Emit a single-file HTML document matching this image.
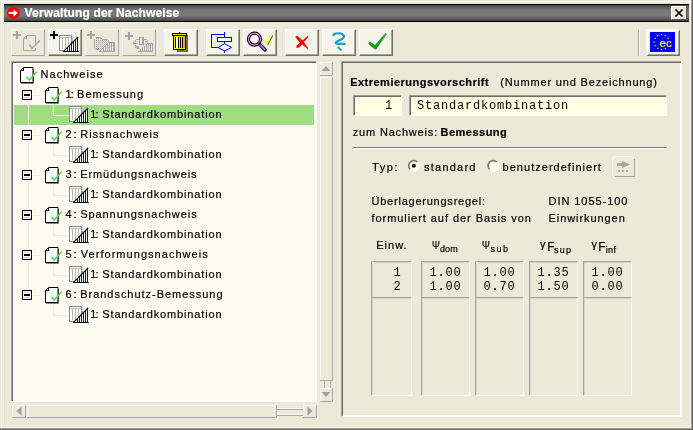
<!DOCTYPE html>
<html><head><meta charset="utf-8">
<style>
*{box-sizing:border-box;margin:0;padding:0}
html,body{width:693px;height:430px;overflow:hidden}
body{background:#ECE9D8;position:relative;font-family:"Liberation Sans",sans-serif;font-size:11px;color:#000}
.a{position:absolute}
.t{position:absolute;white-space:nowrap;line-height:14px;height:14px;letter-spacing:.55px;-webkit-text-stroke:.2px}
.b{font-weight:bold}
.m{position:absolute;white-space:pre;font-family:"Liberation Mono",monospace;font-size:12px;letter-spacing:.8px;line-height:14px;height:14px}
.btn{position:absolute;top:29px;width:34px;height:27px;background:#F5F4EA;border:1px solid;border-color:#fff #716F64 #716F64 #fff;box-shadow:inset -1px -1px 0 #ACA899}
.dis{position:absolute;top:29px;width:34px;height:27px;background:#ECE9D8;border:1px solid;border-color:#F6F5EE #A3A3AB #A3A3AB #F6F5EE}
.sunk{position:absolute;border:1px solid;border-color:#A0A0A0 #fff #fff #A0A0A0;box-shadow:inset 1px 1px 0 #6E6E6E}
.cell{position:absolute;border:1px solid;border-color:#A5A5A5 #F8F7F0 #F8F7F0 #A5A5A5;box-shadow:inset 1px 1px 0 #D8D6C8}
svg{position:absolute;overflow:visible;left:0;top:0}
</style></head><body>
<div id="w" style="position:absolute;left:0;top:0;width:693px;height:430px;will-change:transform">
<!-- window frame -->
<div class="a" style="left:1px;top:1px;width:690px;height:1px;background:#fff"></div>
<div class="a" style="left:1px;top:1px;width:1px;height:427px;background:#fff"></div>
<div class="a" style="left:690px;top:2px;width:1px;height:426px;background:#F3F2E6"></div>
<div class="a" style="left:2px;top:427px;width:689px;height:1px;background:#F3F2E6"></div>
<div class="a" style="left:691px;top:0;width:1px;height:430px;background:#9D9DA1"></div>
<div class="a" style="left:692px;top:0;width:1px;height:430px;background:#6A695F"></div>
<div class="a" style="left:0;top:428px;width:692px;height:1px;background:#9D9DA1"></div>
<div class="a" style="left:0;top:429px;width:693px;height:1px;background:#6A695F"></div>
<!-- title bar -->
<div class="a" style="left:4px;top:4px;width:685px;height:18px;background:linear-gradient(#000 0,#000 1px,#444 1px,#787878 6px,#787878 11.500px,#464646 17px,#000 17px,#000 18px)"></div>
<svg width="30" height="24"><ellipse cx="13.500" cy="13" rx="6.500" ry="6.100" fill="#F00"/><path d="M8.6 12h5v-2.6l4.4 3.6-4.4 3.6v-2.6h-5z" fill="#fff"/></svg>
<div class="t" id="title" style="left:24.60px;top:6px;letter-spacing:0.140px;font-weight:bold;font-size:12px;color:#fff">Verwaltung der Nachweise</div>
<div class="a" style="left:671px;top:6px;width:16px;height:14px;background:#ECE9D8;border:1px solid;border-color:#fff #555 #555 #fff"></div>
<svg width="693" height="24"><path d="M675.5 9.5l7 7M682.5 9.5l-7 7" stroke="#000" stroke-width="1.7" fill="none"/></svg>

<!-- toolbar -->
<div class="dis" style="left:11px"></div>
<div class="btn" style="left:48px"></div>
<div class="dis" style="left:85px"></div>
<div class="dis" style="left:122px"></div>
<div class="btn" style="left:164px"></div>
<div class="btn" style="left:206px"></div>
<div class="btn" style="left:243px"></div>
<div class="btn" style="left:285px"></div>
<div class="btn" style="left:322px"></div>
<div class="btn" style="left:359px"></div>
<div class="a" style="left:638px;top:29px;width:1px;height:27px;background:#ACA899"></div>
<div class="a" style="left:639px;top:29px;width:1px;height:27px;background:#fff"></div>
<div class="btn" style="left:646px;border-width:2px 1px 1px 2px"></div>
<div class="a" style="left:650px;top:32px;width:25px;height:20px;background:#0000FF"></div>

<svg width="693" height="60" fill="#E8D800"><rect x="660.9" y="34.0" width="1.3" height="1.3"/><rect x="664.6" y="35.0" width="1.3" height="1.3"/><rect x="667.3" y="37.7" width="1.3" height="1.3"/><rect x="664.6" y="47.8" width="1.3" height="1.3"/><rect x="660.9" y="48.8" width="1.3" height="1.3"/><rect x="657.2" y="47.8" width="1.3" height="1.3"/><rect x="654.5" y="45.1" width="1.3" height="1.3"/><rect x="653.5" y="41.4" width="1.3" height="1.3"/><rect x="654.5" y="37.7" width="1.3" height="1.3"/><rect x="657.2" y="35.0" width="1.3" height="1.3"/></svg>
<div class="t" style="left:659.5px;top:36px;font-size:11.5px;color:#FFFF00;letter-spacing:0">ec</div>
<svg width="693" height="60" shape-rendering="crispEdges">
<defs><pattern id="dz" width="2" height="2" patternUnits="userSpaceOnUse"><rect width="1" height="1" fill="#A3A3AB"/><rect x="1" y="1" width="1" height="1" fill="#BDBDC0"/></pattern></defs>
<path d="M13 34h8v2h-8zM16 31h2v8h-2z" fill="#A3A3AB"/>
<path d="M26.500 35.500h9v8M35.500 48v2.500h-12v-12l3-3" fill="none" stroke="#A3A3AB" shape-rendering="auto"/><path d="M23.500 38.500h3v-3" fill="none" stroke="#A3A3AB"/>
<path d="M29.300 44.500l2.800 3.700 7.800-8" fill="none" stroke="#A3A3AB" stroke-width="1.300" shape-rendering="auto"/>
<path d="M50 34h8v2h-8zM53 31h2v8h-2z" fill="#000"/>
<rect x="59.5" y="35.5" width="12" height="15" fill="#fff" stroke="#8C8C8C"/><rect x="72" y="36" width="1" height="15" fill="#C4C4C4"/><path d="M60 37.5h11M62.5 37v12M65.5 37v12M68.5 37v12" stroke="#B8B8B8" fill="none"/>
<path d="M63.5 51.5L78 37V51.5z" fill="#fff" shape-rendering="auto"/><rect x="67" y="48" width="1" height="3" fill="#0000E8"/><rect x="69" y="46" width="1" height="5" fill="#0000E8"/><rect x="71" y="44" width="1" height="7" fill="#0000E8"/><rect x="73" y="42" width="1" height="9" fill="#0000E8"/><rect x="75" y="40" width="1" height="11" fill="#0000E8"/><rect x="77" y="38" width="1" height="13" fill="#0000E8"/><path d="M63 51.5h15.500" stroke="#000" fill="none"/><path d="M63.3 51.7L78 37" stroke="#000" stroke-width="1.150" fill="none" shape-rendering="auto"/>
<path d="M87 34h8v2h-8zM90 31h2v8h-2z" fill="#A3A3AB"/>
<path d="M96 40h11v9h-11z" fill="url(#dz)"/><path d="M96 38h1v1h-1zM98 38h1v1h-1zM100 38h1v1h-1z" fill="#A3A3AB"/>
<path d="M94.500 39V48.500L95.500 49.500H100M95.500 38L96 37.500H100.500L102.500 39.500H107.500L108.500 40.500V43" fill="none" stroke="#A3A3AB" shape-rendering="auto"/>
<path d="M99 52L109 42h6v10z" fill="#ECE9D8" shape-rendering="auto"/>
<rect x="103" y="47" width="1" height="4" fill="#A3A3AB"/>
<rect x="105" y="45" width="1" height="6" fill="#A3A3AB"/>
<rect x="107" y="43" width="1" height="8" fill="#A3A3AB"/>
<rect x="109" y="42" width="1" height="9" fill="#A3A3AB"/>
<rect x="111" y="42" width="1" height="9" fill="#A3A3AB"/>
<rect x="113" y="42" width="1" height="9" fill="#A3A3AB"/>
<path d="M99 51.500h16" stroke="#A3A3AB"/><path d="M100 51L108.500 42.500H114.500V51" stroke="#A3A3AB" fill="none" shape-rendering="auto"/>
<path d="M125 35h8v2h-8zM128 32h2v8h-2z" fill="#A3A3AB"/>
<path d="M139.500 39.500H136.500L135.500 40.500V41.500L133.500 42.500V44.500L135.500 45.500V47.500L137.500 48.500L138.500 49.500M143.500 39.500H146.500L147.500 40.500V41.500L148.500 42.500M134 43.500h3M136 46.500h2M145 41.500h3" fill="none" stroke="#A3A3AB" shape-rendering="auto"/>
<rect x="137" y="46" width="2" height="3" fill="#A3A3AB"/>
<rect x="139.500" y="37.500" width="4" height="7" fill="#F1EFE3" stroke="#A3A3AB"/><rect x="142" y="38" width="1" height="6" fill="#A3A3AB"/>
<rect x="140" y="49" width="1" height="2" fill="#A3A3AB"/>
<rect x="142" y="47" width="1" height="4" fill="#A3A3AB"/>
<rect x="144" y="46" width="1" height="5" fill="#A3A3AB"/>
<rect x="146" y="44" width="1" height="7" fill="#A3A3AB"/>
<rect x="148" y="43" width="1" height="8" fill="#A3A3AB"/>
<rect x="150" y="43" width="1" height="8" fill="#A3A3AB"/>
<path d="M138 51.500h15" stroke="#A3A3AB"/><path d="M147 43.500h5.500V51" stroke="#A3A3AB" fill="none"/>
<path d="M175 37h12.500v14.500h-10.500z" fill="#6E6E40"/><path d="M186 35h1.500v2h-1.500z" fill="#6E6E40"/>
<rect x="172.500" y="33.500" width="14" height="2" fill="#FFE800" stroke="#000"/>
<rect x="179" y="32" width="1" height="1" fill="#000"/>
<rect x="173.500" y="35.500" width="12" height="14" fill="#FFF000" stroke="#000"/>
<rect x="176" y="37" width="2" height="12" fill="#fff"/><rect x="183" y="36" width="2" height="13" fill="#FFA828"/>
<path d="M175.500 37v11M178.500 37v11M180.500 37v11M182.500 37v11" stroke="#000"/>
<path d="M174 48.500h11" stroke="#FFF000"/>
<path d="M224.500 32v5M224.500 42v2M224.500 50v3M224.500 34.500H211.500V47.500H219" stroke="#00F" fill="none"/>
<rect x="217.500" y="37.500" width="14" height="4" fill="#fff" stroke="#00F"/>
<path d="M218 47.500L224.500 43.700 231.500 47.500 224.500 50.800z" fill="#fff" stroke="#00F" shape-rendering="auto"/>
<g shape-rendering="auto"><circle cx="254.500" cy="39.200" r="6" fill="#fff" stroke="#000" stroke-width="3.200"/><circle cx="254.500" cy="39.200" r="6" fill="none" stroke="#EE82DC" stroke-width="1.200"/>
<path d="M259.800 44.500L265 49.800" stroke="#000" stroke-width="3.600" stroke-linecap="round"/><path d="M260.300 45L264.800 49.500" stroke="#B868E0" stroke-width="1.800" stroke-linecap="round"/>
<path d="M265.300 41.300l2.500 3 5-9" stroke="#1E961E" stroke-width="1.300" fill="none"/><path d="M264.500 40.500l2.500 3 5-9" stroke="#FFFF00" stroke-width="1.500" fill="none"/></g>
<g shape-rendering="auto"><path d="M296 37.500L308 49" stroke="#A8B0A8" stroke-width="1.200"/><path d="M295.200 36.700l2-.9 6 5.300 5 7.200-.400.500-7-5.300z" fill="#F00"/><path d="M307.800 35.800l.7 1-9.300 10.800-2.600.300-.3-2z" fill="#F00"/></g>
<g shape-rendering="auto" fill="none" stroke="#18A0C8" stroke-linecap="round"><path d="M333.500 34.800c2-1.300 6-2 8.500-.8 3 1.500 2.500 3.500 0 5-2.500 1.500-6 2.500-6.300 3.700-.3 1.200 3 1 9 1.200" stroke-width="2.300"/><path d="M338.300 47.500l2.700 2.400" stroke-width="1.900"/></g>
<g shape-rendering="auto"><path d="M369.500 44l6 5 11-15" stroke="#9A9A9A" stroke-width="1.500" fill="none"/><path d="M368.200 43.200l2-1.500 4.800 3.300 10.500-12 .6.500-9.600 15.200-2.300.3z" fill="#14A014"/></g>
</svg>
<div class="a" style="left:11px;top:61px;width:306px;height:341px;background:#FDFAEF;border:1px solid;border-color:#A5A5A5 #fff #fff #A5A5A5;box-shadow:inset 1px 1px 0 #6A6A6A,inset -1px -1px 0 #fff"></div>
<div class="a" style="left:14px;top:105px;width:300px;height:20px;background:#A0DC82"></div>
<svg width="340" height="420" shape-rendering="crispEdges">
<path d="M28.500 84v206" stroke="#F1EEE2" fill="none"/>
<path d="M34 69v15h-13v-1h12v-14z" fill="#8A8A8A"/><path d="M23.5 67.5h9.500v15h-12.500v-12z" fill="#fff" stroke="#000" shape-rendering="auto"/><path d="M21 70.5h2.500v-2.500" fill="none" stroke="#000"/><path d="M26.3 76.8l3 3.200 7.300-8.200" fill="none" stroke="#5AD25A" stroke-width="1.600" shape-rendering="auto"/>
<path d="M33 95.5h12" stroke="#F1EEE2"/>
<rect x="21" y="89" width="12" height="12" fill="#FEFCF4"/><rect x="22.5" y="90.5" width="9" height="9" fill="#fff" stroke="#000"/><path d="M23 92.5h8M23 97.5h8" stroke="#DCDCDC"/><rect x="24" y="94" width="6" height="2" fill="#000"/>
<path d="M59 89v15h-13v-1h12v-14z" fill="#8A8A8A"/><path d="M48.5 87.5h9.500v15h-12.500v-12z" fill="#fff" stroke="#000" shape-rendering="auto"/><path d="M46 90.5h2.500v-2.500" fill="none" stroke="#000"/><path d="M51.3 96.8l3 3.200 7.300-8.200" fill="none" stroke="#5AD25A" stroke-width="1.600" shape-rendering="auto"/>
<path d="M53.500 104v11.500h15" stroke="#F4F8E4" fill="none"/>
<path d="M28.500 105v20" stroke="#F4F8E4" fill="none"/>
<rect x="69.5" y="106.5" width="12" height="15" fill="#fff" stroke="#8C8C8C"/><rect x="82" y="107" width="1" height="15" fill="#C4C4C4"/><path d="M70 108.5h11M72.5 108v12M75.5 108v12M78.5 108v12" stroke="#B8B8B8" fill="none"/>
<path d="M73.5 122.5L88 108V122.5z" fill="#fff" shape-rendering="auto"/><rect x="77" y="119" width="1" height="3" fill="#0000E8"/><rect x="79" y="117" width="1" height="5" fill="#0000E8"/><rect x="81" y="115" width="1" height="7" fill="#0000E8"/><rect x="83" y="113" width="1" height="9" fill="#0000E8"/><rect x="85" y="111" width="1" height="11" fill="#0000E8"/><rect x="87" y="109" width="1" height="13" fill="#0000E8"/><path d="M73 122.5h15.500" stroke="#000" fill="none"/><path d="M73.3 122.7L88 108" stroke="#000" stroke-width="1.150" fill="none" shape-rendering="auto"/>
<path d="M33 135.5h12" stroke="#F1EEE2"/>
<rect x="21" y="129" width="12" height="12" fill="#FEFCF4"/><rect x="22.5" y="130.5" width="9" height="9" fill="#fff" stroke="#000"/><path d="M23 132.5h8M23 137.5h8" stroke="#DCDCDC"/><rect x="24" y="134" width="6" height="2" fill="#000"/>
<path d="M59 129v15h-13v-1h12v-14z" fill="#8A8A8A"/><path d="M48.5 127.5h9.500v15h-12.500v-12z" fill="#fff" stroke="#000" shape-rendering="auto"/><path d="M46 130.5h2.500v-2.500" fill="none" stroke="#000"/><path d="M51.3 136.8l3 3.200 7.300-8.200" fill="none" stroke="#5AD25A" stroke-width="1.600" shape-rendering="auto"/>
<path d="M53.500 144v11.500h15" stroke="#F1EEE2" fill="none"/>
<rect x="69.5" y="146.5" width="12" height="15" fill="#fff" stroke="#8C8C8C"/><rect x="82" y="147" width="1" height="15" fill="#C4C4C4"/><path d="M70 148.5h11M72.5 148v12M75.5 148v12M78.5 148v12" stroke="#B8B8B8" fill="none"/>
<path d="M73.5 162.5L88 148V162.5z" fill="#fff" shape-rendering="auto"/><rect x="77" y="159" width="1" height="3" fill="#0000E8"/><rect x="79" y="157" width="1" height="5" fill="#0000E8"/><rect x="81" y="155" width="1" height="7" fill="#0000E8"/><rect x="83" y="153" width="1" height="9" fill="#0000E8"/><rect x="85" y="151" width="1" height="11" fill="#0000E8"/><rect x="87" y="149" width="1" height="13" fill="#0000E8"/><path d="M73 162.5h15.500" stroke="#000" fill="none"/><path d="M73.3 162.7L88 148" stroke="#000" stroke-width="1.150" fill="none" shape-rendering="auto"/>
<path d="M33 175.5h12" stroke="#F1EEE2"/>
<rect x="21" y="169" width="12" height="12" fill="#FEFCF4"/><rect x="22.5" y="170.5" width="9" height="9" fill="#fff" stroke="#000"/><path d="M23 172.5h8M23 177.5h8" stroke="#DCDCDC"/><rect x="24" y="174" width="6" height="2" fill="#000"/>
<path d="M59 169v15h-13v-1h12v-14z" fill="#8A8A8A"/><path d="M48.5 167.5h9.500v15h-12.500v-12z" fill="#fff" stroke="#000" shape-rendering="auto"/><path d="M46 170.5h2.500v-2.500" fill="none" stroke="#000"/><path d="M51.3 176.8l3 3.200 7.300-8.200" fill="none" stroke="#5AD25A" stroke-width="1.600" shape-rendering="auto"/>
<path d="M53.500 184v11.500h15" stroke="#F1EEE2" fill="none"/>
<rect x="69.5" y="186.5" width="12" height="15" fill="#fff" stroke="#8C8C8C"/><rect x="82" y="187" width="1" height="15" fill="#C4C4C4"/><path d="M70 188.5h11M72.5 188v12M75.5 188v12M78.5 188v12" stroke="#B8B8B8" fill="none"/>
<path d="M73.5 202.5L88 188V202.5z" fill="#fff" shape-rendering="auto"/><rect x="77" y="199" width="1" height="3" fill="#0000E8"/><rect x="79" y="197" width="1" height="5" fill="#0000E8"/><rect x="81" y="195" width="1" height="7" fill="#0000E8"/><rect x="83" y="193" width="1" height="9" fill="#0000E8"/><rect x="85" y="191" width="1" height="11" fill="#0000E8"/><rect x="87" y="189" width="1" height="13" fill="#0000E8"/><path d="M73 202.5h15.500" stroke="#000" fill="none"/><path d="M73.3 202.7L88 188" stroke="#000" stroke-width="1.150" fill="none" shape-rendering="auto"/>
<path d="M33 215.5h12" stroke="#F1EEE2"/>
<rect x="21" y="209" width="12" height="12" fill="#FEFCF4"/><rect x="22.5" y="210.5" width="9" height="9" fill="#fff" stroke="#000"/><path d="M23 212.5h8M23 217.5h8" stroke="#DCDCDC"/><rect x="24" y="214" width="6" height="2" fill="#000"/>
<path d="M59 209v15h-13v-1h12v-14z" fill="#8A8A8A"/><path d="M48.5 207.5h9.500v15h-12.500v-12z" fill="#fff" stroke="#000" shape-rendering="auto"/><path d="M46 210.5h2.500v-2.500" fill="none" stroke="#000"/><path d="M51.3 216.8l3 3.200 7.300-8.200" fill="none" stroke="#5AD25A" stroke-width="1.600" shape-rendering="auto"/>
<path d="M53.500 224v11.500h15" stroke="#F1EEE2" fill="none"/>
<rect x="69.5" y="226.5" width="12" height="15" fill="#fff" stroke="#8C8C8C"/><rect x="82" y="227" width="1" height="15" fill="#C4C4C4"/><path d="M70 228.5h11M72.5 228v12M75.5 228v12M78.5 228v12" stroke="#B8B8B8" fill="none"/>
<path d="M73.5 242.5L88 228V242.5z" fill="#fff" shape-rendering="auto"/><rect x="77" y="239" width="1" height="3" fill="#0000E8"/><rect x="79" y="237" width="1" height="5" fill="#0000E8"/><rect x="81" y="235" width="1" height="7" fill="#0000E8"/><rect x="83" y="233" width="1" height="9" fill="#0000E8"/><rect x="85" y="231" width="1" height="11" fill="#0000E8"/><rect x="87" y="229" width="1" height="13" fill="#0000E8"/><path d="M73 242.5h15.500" stroke="#000" fill="none"/><path d="M73.3 242.7L88 228" stroke="#000" stroke-width="1.150" fill="none" shape-rendering="auto"/>
<path d="M33 255.5h12" stroke="#F1EEE2"/>
<rect x="21" y="249" width="12" height="12" fill="#FEFCF4"/><rect x="22.5" y="250.5" width="9" height="9" fill="#fff" stroke="#000"/><path d="M23 252.5h8M23 257.5h8" stroke="#DCDCDC"/><rect x="24" y="254" width="6" height="2" fill="#000"/>
<path d="M59 249v15h-13v-1h12v-14z" fill="#8A8A8A"/><path d="M48.5 247.5h9.500v15h-12.500v-12z" fill="#fff" stroke="#000" shape-rendering="auto"/><path d="M46 250.5h2.500v-2.500" fill="none" stroke="#000"/><path d="M51.3 256.8l3 3.200 7.300-8.200" fill="none" stroke="#5AD25A" stroke-width="1.600" shape-rendering="auto"/>
<path d="M53.500 264v11.500h15" stroke="#F1EEE2" fill="none"/>
<rect x="69.5" y="266.5" width="12" height="15" fill="#fff" stroke="#8C8C8C"/><rect x="82" y="267" width="1" height="15" fill="#C4C4C4"/><path d="M70 268.5h11M72.5 268v12M75.5 268v12M78.5 268v12" stroke="#B8B8B8" fill="none"/>
<path d="M73.5 282.5L88 268V282.5z" fill="#fff" shape-rendering="auto"/><rect x="77" y="279" width="1" height="3" fill="#0000E8"/><rect x="79" y="277" width="1" height="5" fill="#0000E8"/><rect x="81" y="275" width="1" height="7" fill="#0000E8"/><rect x="83" y="273" width="1" height="9" fill="#0000E8"/><rect x="85" y="271" width="1" height="11" fill="#0000E8"/><rect x="87" y="269" width="1" height="13" fill="#0000E8"/><path d="M73 282.5h15.500" stroke="#000" fill="none"/><path d="M73.3 282.7L88 268" stroke="#000" stroke-width="1.150" fill="none" shape-rendering="auto"/>
<path d="M33 295.5h12" stroke="#F1EEE2"/>
<rect x="21" y="289" width="12" height="12" fill="#FEFCF4"/><rect x="22.5" y="290.5" width="9" height="9" fill="#fff" stroke="#000"/><path d="M23 292.5h8M23 297.5h8" stroke="#DCDCDC"/><rect x="24" y="294" width="6" height="2" fill="#000"/>
<path d="M59 289v15h-13v-1h12v-14z" fill="#8A8A8A"/><path d="M48.5 287.5h9.500v15h-12.500v-12z" fill="#fff" stroke="#000" shape-rendering="auto"/><path d="M46 290.5h2.500v-2.500" fill="none" stroke="#000"/><path d="M51.3 296.8l3 3.200 7.300-8.200" fill="none" stroke="#5AD25A" stroke-width="1.600" shape-rendering="auto"/>
<path d="M53.500 304v11.500h15" stroke="#F1EEE2" fill="none"/>
<rect x="69.5" y="306.5" width="12" height="15" fill="#fff" stroke="#8C8C8C"/><rect x="82" y="307" width="1" height="15" fill="#C4C4C4"/><path d="M70 308.5h11M72.5 308v12M75.5 308v12M78.5 308v12" stroke="#B8B8B8" fill="none"/>
<path d="M73.5 322.5L88 308V322.5z" fill="#fff" shape-rendering="auto"/><rect x="77" y="319" width="1" height="3" fill="#0000E8"/><rect x="79" y="317" width="1" height="5" fill="#0000E8"/><rect x="81" y="315" width="1" height="7" fill="#0000E8"/><rect x="83" y="313" width="1" height="9" fill="#0000E8"/><rect x="85" y="311" width="1" height="11" fill="#0000E8"/><rect x="87" y="309" width="1" height="13" fill="#0000E8"/><path d="M73 322.5h15.500" stroke="#000" fill="none"/><path d="M73.3 322.7L88 308" stroke="#000" stroke-width="1.150" fill="none" shape-rendering="auto"/>
</svg>
<div class="t" id="tr0" style="left:40.50px;top:67px;letter-spacing:1.048px">Nachweise</div>
<div class="t" style="left:65.5px;top:87px;letter-spacing:-0.9px">1:</div>
<div class="t" id="tr1" style="left:77.10px;top:87px;letter-spacing:0.988px">Bemessung</div>
<div class="t" style="left:90.3px;top:107px;letter-spacing:-.900px">1:</div>
<div class="t" id="tr2" style="left:102.30px;top:107px;letter-spacing:0.852px">Standardkombination</div>
<div class="t" style="left:65.5px;top:127px;letter-spacing:1.9px">2:</div>
<div class="t" id="tr3" style="left:80.20px;top:127px;letter-spacing:1.005px">Rissnachweis</div>
<div class="t" style="left:90.3px;top:147px;letter-spacing:-.900px">1:</div>
<div class="t" id="tr4" style="left:102.30px;top:147px;letter-spacing:0.852px">Standardkombination</div>
<div class="t" style="left:65.5px;top:167px;letter-spacing:1.9px">3:</div>
<div class="t" id="tr5" style="left:80.20px;top:167px;letter-spacing:0.892px">Ermüdungsnachweis</div>
<div class="t" style="left:90.3px;top:187px;letter-spacing:-.900px">1:</div>
<div class="t" id="tr6" style="left:102.30px;top:187px;letter-spacing:0.852px">Standardkombination</div>
<div class="t" style="left:65.5px;top:207px;letter-spacing:1.9px">4:</div>
<div class="t" id="tr7" style="left:80.20px;top:207px;letter-spacing:0.936px">Spannungsnachweis</div>
<div class="t" style="left:90.3px;top:227px;letter-spacing:-.900px">1:</div>
<div class="t" id="tr8" style="left:102.30px;top:227px;letter-spacing:0.852px">Standardkombination</div>
<div class="t" style="left:65.5px;top:247px;letter-spacing:1.9px">5:</div>
<div class="t" id="tr9" style="left:80.80px;top:247px;letter-spacing:1.037px">Verformungsnachweis</div>
<div class="t" style="left:90.3px;top:267px;letter-spacing:-.900px">1:</div>
<div class="t" id="tr10" style="left:102.30px;top:267px;letter-spacing:0.852px">Standardkombination</div>
<div class="t" style="left:65.5px;top:287px;letter-spacing:1.9px">6:</div>
<div class="t" id="tr11" style="left:80.20px;top:287px;letter-spacing:0.975px">Brandschutz-Bemessung</div>
<div class="t" style="left:90.3px;top:307px;letter-spacing:-.900px">1:</div>
<div class="t" id="tr12" style="left:102.30px;top:307px;letter-spacing:0.852px">Standardkombination</div>
<svg width="340" height="430" shape-rendering="crispEdges">
<g fill="#ECE9D8" stroke="none">
<rect x="320" y="62" width="13" height="14"/><rect x="320" y="77" width="13" height="304"/><rect x="320" y="388" width="13" height="14"/>
<rect x="12" y="405" width="13" height="13"/><rect x="27" y="405" width="250" height="13"/><rect x="303" y="405" width="14" height="13"/>
</g>
<g fill="none">
<path d="M320.500 76V62.500H333" stroke="#F8F7F0"/><path d="M320 75.500H332.500V62" stroke="#A8A8B0"/>
<path d="M320.500 381V77.500H333" stroke="#F8F7F0"/><path d="M320 380.500H332.500V77" stroke="#A8A8B0"/>
<path d="M320.500 402V388.500H333" stroke="#F8F7F0"/><path d="M320 401.500H332.500V388" stroke="#A8A8B0"/>
<path d="M324.500 381v7M330.500 381v7" stroke="#A8A8B0"/><path d="M323.500 381v7M329.500 381v7" stroke="#F8F7F0"/>
<path d="M12.500 418V405.500H25" stroke="#F8F7F0"/><path d="M12 417.500H25.500V405" stroke="#A8A8B0"/>
<path d="M27.500 418V405.500H277" stroke="#F8F7F0"/><path d="M27 417.500H276.500V405" stroke="#A8A8B0"/>
<path d="M303.500 418V405.500H317" stroke="#F8F7F0"/><path d="M303 417.500H316.500V405" stroke="#A8A8B0"/>
<path d="M277 409.500h26M277 415.500h26" stroke="#A8A8B0"/><path d="M277 408.500h26M277 414.500h26" stroke="#F8F7F0"/>
</g>
<g fill="#A0A0A8" shape-rendering="auto">
<path d="M321.500 71h9l-4.500-5z"/><path d="M321.500 392h9l-4.500 5z"/>
<path d="M21.500 406.500v9l-5-4.500z"/><path d="M307.500 406.500v9l5-4.500z"/>
</g></svg>
<div class="a" style="left:341px;top:61px;width:341px;height:356px;border:1px solid;border-color:#A5A5A5 #fff #fff #A5A5A5;box-shadow:inset 1px 1px 0 #6A6A6A,inset -1px -1px 0 #fff"></div>

<div class="sunk" style="left:353px;top:95px;width:49px;height:21px;background:#FFFFE1"></div>
<div class="sunk" style="left:409px;top:95px;width:258px;height:21px;background:#FFFFE1"></div>
<div class="m" style="left:385px;top:99px">1</div>
<div class="m" style="left:417px;top:99px">Standardkombination</div>
<div class="a" style="left:353px;top:147px;width:314px;height:1px;background:#808080"></div><div class="a" style="left:353px;top:148px;width:314px;height:1px;background:#F8F7F0"></div>

<div class="t" id="r1" style="left:350.20px;top:75px;letter-spacing:0.483px;font-weight:bold">Extremierungsvorschrift</div>
<div class="t" id="r2" style="left:500.30px;top:75px;letter-spacing:0.827px">(Nummer und Bezeichnung)</div>
<div class="t" id="r3" style="left:352.80px;top:125px;letter-spacing:0.818px">zum Nachweis:</div>
<div class="t" id="r4" style="left:440.50px;top:125px;letter-spacing:0.493px;font-weight:bold">Bemessung</div>
<div class="t" id="r5" style="left:372.00px;top:160px;letter-spacing:1.568px">Typ:</div>
<div class="t" id="r6" style="left:424.10px;top:160px;letter-spacing:1.213px">standard</div>
<div class="t" id="r7" style="left:502.60px;top:160px;letter-spacing:1.022px">benutzerdefiniert</div>
<div class="t" id="r8" style="left:371.50px;top:194px;letter-spacing:0.768px">Überlagerungsregel:</div>
<div class="t" id="r9" style="left:371.50px;top:211px;letter-spacing:0.945px">formuliert auf der Basis von</div>
<div class="t" id="r10" style="left:548.50px;top:194px;letter-spacing:0.945px">DIN 1055-100</div>
<div class="t" id="r11" style="left:548.50px;top:211px;letter-spacing:0.932px">Einwirkungen</div>
<div class="t" id="r12" style="left:376.20px;top:238px;letter-spacing:1.026px">Einw.</div>
<svg width="693" height="200"><g id="radio">
<circle cx="413.8" cy="165.8" r="5.300" fill="#FFFFE1"/><path d="M410.19 169.41A5.1 5.1 0 0 1 417.41 162.19" fill="none" stroke="#787878" stroke-width="1.700"/><path d="M410.19 169.41A5.1 5.1 0 0 0 417.41 162.19" fill="none" stroke="#fff" stroke-width="1.500"/><circle cx="413.8" cy="165.8" r="2" fill="#000"/>
<circle cx="493.2" cy="165.8" r="5.300" fill="#FFFFE1"/><path d="M489.59 169.41A5.1 5.1 0 0 1 496.81 162.19" fill="none" stroke="#787878" stroke-width="1.700"/><path d="M489.59 169.41A5.1 5.1 0 0 0 496.81 162.19" fill="none" stroke="#fff" stroke-width="1.500"/>
</g>
<path d="M612.500 176V159.500Q612.500 156.500 615.500 156.500H631Q634 156.500 634.500 159" fill="none" stroke="#F8F7F0"/>
<path d="M634.500 159V176.500H615" fill="none" stroke="#A3A3AB" shape-rendering="crispEdges"/>
<path d="M617 163h5v-2l8 3.500-8 3.500v-2h-5z" fill="#A3A3AB"/>
<path d="M618 170h2v2h-2zM622 170h2v2h-2zM626 170h2v2h-2z" fill="#A3A3AB"/>
</svg>
<div class="t" style="left:431.5px;top:238px;font-size:11.500px;letter-spacing:0;transform:scaleX(.82);transform-origin:0 0">Ψ</div>
<div class="t" style="left:440px;top:241.500px;font-size:9px;letter-spacing:0.1px">dom</div>
<div class="t" style="left:482px;top:238px;font-size:11.500px;letter-spacing:0;transform:scaleX(.82);transform-origin:0 0">Ψ</div>
<div class="t" style="left:490.5px;top:241.500px;font-size:9px;letter-spacing:1.5px">sub</div>
<div class="t" style="left:540px;top:237px;letter-spacing:0">γ</div>
<div class="t" style="left:547.3px;top:240px;font-size:12px;letter-spacing:0">F</div>
<div class="t" style="left:554px;top:243px;font-size:9px;letter-spacing:1.3px">sup</div>
<div class="t" style="left:591.5px;top:237px;letter-spacing:0">γ</div>
<div class="t" style="left:598.3px;top:240px;font-size:12px;letter-spacing:0">F</div>
<div class="t" style="left:605.8px;top:243px;font-size:9px;letter-spacing:0.3px">inf</div>
<div class="cell" style="left:371px;top:261px;width:41px;height:37px"></div>
<div class="cell" style="left:371px;top:297px;width:41px;height:99px"></div>
<div class="cell" style="left:421px;top:261px;width:49px;height:37px"></div>
<div class="cell" style="left:421px;top:297px;width:49px;height:99px"></div>
<div class="cell" style="left:475px;top:261px;width:49px;height:37px"></div>
<div class="cell" style="left:475px;top:297px;width:49px;height:99px"></div>
<div class="cell" style="left:529px;top:261px;width:49px;height:37px"></div>
<div class="cell" style="left:529px;top:297px;width:49px;height:99px"></div>
<div class="cell" style="left:583px;top:261px;width:49px;height:37px"></div>
<div class="cell" style="left:583px;top:297px;width:49px;height:99px"></div>
<div class="m" style="left:393.5px;top:266px">1</div><div class="m" style="left:393.5px;top:280px">2</div>
<div class="m" style="left:429.5px;top:266px">1.00</div><div class="m" style="left:429.5px;top:280px">1.00</div>
<div class="m" style="left:483.5px;top:266px">1.00</div><div class="m" style="left:483.5px;top:280px">0.70</div>
<div class="m" style="left:537.5px;top:266px">1.35</div><div class="m" style="left:537.5px;top:280px">1.50</div>
<div class="m" style="left:591.5px;top:266px">1.00</div><div class="m" style="left:591.5px;top:280px">0.00</div>
</div></body></html>
